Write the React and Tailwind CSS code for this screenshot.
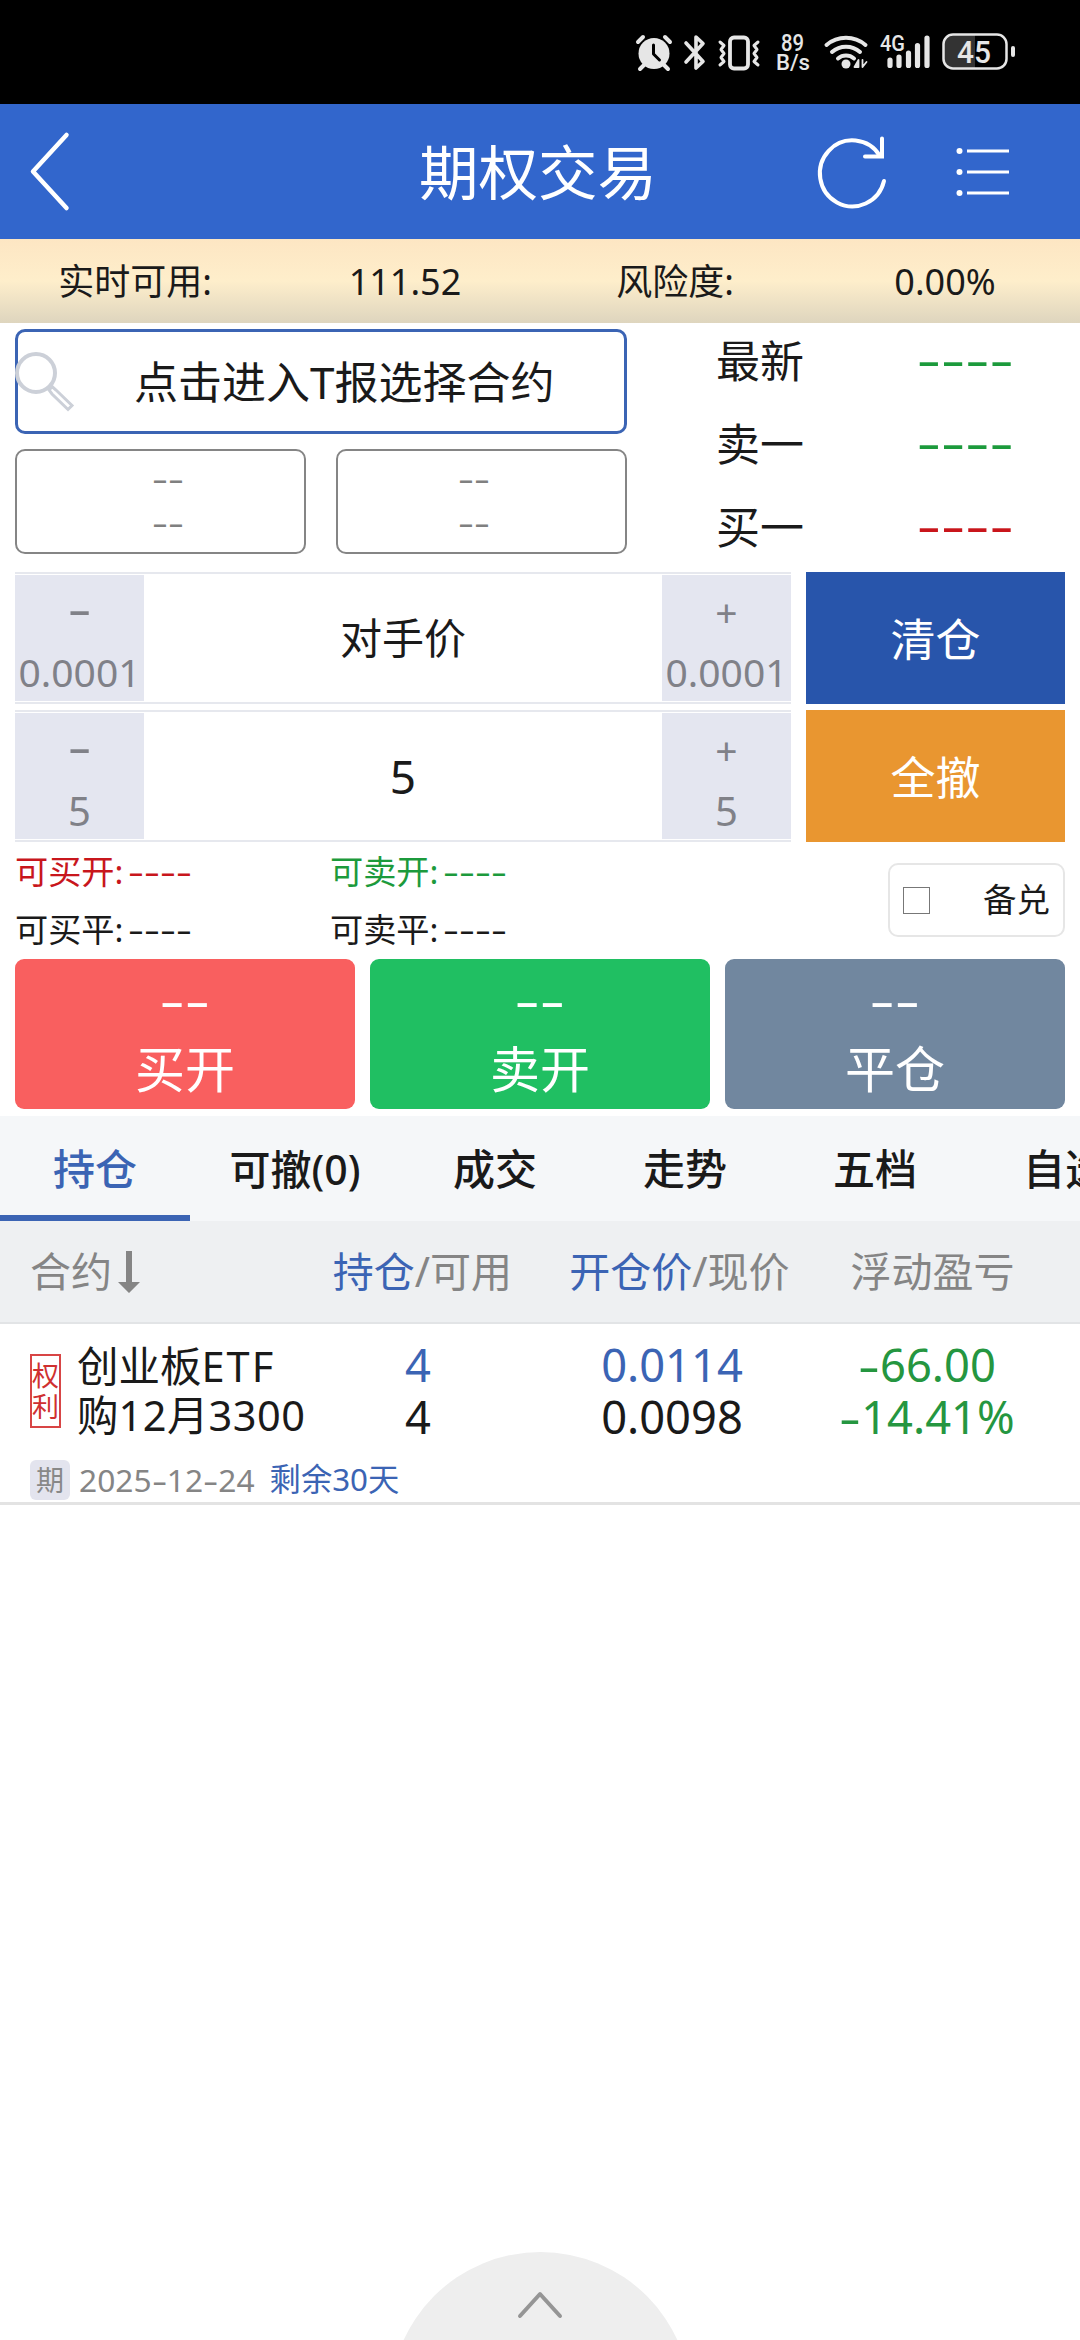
import React from "react";

const FONT = "font-['Noto_Sans','Noto_Sans_CJK_SC',sans-serif]";

function Dashes({ children, className = "" }) {
  return (
    <span className={`inline-block scale-x-[1.6] whitespace-nowrap leading-none ${className}`}>
      {children}
    </span>
  );
}

function Hyphen() {
  return <span className="mr-[0.16em] inline-block origin-left scale-x-[1.5] leading-none">-</span>;
}

function StatusBar() {
  return (
    <div className="h-[104px] bg-black">
      <svg width="1080" height="104" viewBox="0 0 1080 104" fill="none" stroke="#e6e6e6" strokeLinecap="round" strokeLinejoin="round">
        <circle cx="654" cy="53.500" r="15.500" fill="#e6e6e6" stroke="none" />
        <path d="M638 42l5-5M670 42l-5-5M644 65l-4 4M664 65l4 4" strokeWidth="4" />
        <path d="M653.500 45v9l6 6" stroke="#000" strokeWidth="3" />
        <path d="M686 43l17 18.500-7 6.500V37l7 6.500L686 62" strokeWidth="3.600" />
        <rect x="730" y="37.500" width="18" height="31" rx="4" strokeWidth="3.800" />
        <path d="M720 42l4 3.500-3 4 3 4-3 4 3 4-4 3.500M758 42l-4 3.500 3 4-3 4 3 4-3 4 4 3.500" strokeWidth="3" />
        <path d="M826.500 45a30 30 0 0 1 39 0M832 52a21 21 0 0 1 28 0M838 58.500a12.500 12.500 0 0 1 16 0" strokeWidth="4" />
        <circle cx="846" cy="64" r="4.500" fill="#e6e6e6" stroke="none" />
        <path d="M858.500 60v7h-4zM862.500 67v-7M862.500 67l4-5" strokeWidth="1.800" fill="#e6e6e6" />
        <path d="M890 60v5.500M899 57v8.500M908.500 53v12.500M917.500 45.500v20M927 38v27.500" strokeWidth="5.200" />
        <path d="M975 35H953a10 10 0 0 0-10 10v13a10 10 0 0 0 10 10h22z" fill="#333" stroke="none" />
        <rect x="943.500" y="34.500" width="63" height="34" rx="9.500" strokeWidth="2.500" />
        <path d="M1013 48v7" strokeWidth="4" />
        <g fill="#e6e6e6" stroke="none" fontFamily="Roboto, sans-serif" fontWeight="500">
          <text x="781" y="51" fontSize="23" textLength="23" lengthAdjust="spacingAndGlyphs">89</text>
          <text x="776" y="70" fontSize="22.500" textLength="34" lengthAdjust="spacingAndGlyphs">B/s</text>
          <text x="880" y="51" fontSize="22.500" textLength="25" lengthAdjust="spacingAndGlyphs">4G</text>
          <text x="957" y="63" fontSize="32" textLength="34" lengthAdjust="spacingAndGlyphs">45</text>
        </g>
      </svg>
    </div>
  );
}

function Header() {
  return (
    <header className="grid h-[135px] grid-cols-[419px_237px_1fr] items-center bg-[#3266cc] text-white">
      <svg className="ml-[24px]" width="56" height="88" viewBox="0 0 56 88" fill="none" stroke="#fff" strokeWidth="4.500" strokeLinecap="round" strokeLinejoin="round">
        <path d="M42.500 7L9 43.500L42.500 80" />
      </svg>
      <h1 className="whitespace-nowrap text-[59.5px] leading-none">期权交易</h1>
      <div className="flex items-center">
        <svg className="-mt-[2px] ml-[155px]" width="84" height="84" viewBox="0 0 84 84" fill="none" stroke="#fff" strokeWidth="4" strokeLinecap="round">
          <path d="M69 27A32.500 33 0 1 0 73 52" />
          <path d="M71 9.500V27.500H54" strokeLinejoin="miter" />
        </svg>
        <svg className="ml-[59px]" width="60" height="60" viewBox="0 0 60 60">
          <g fill="#fff">
            <circle cx="5.500" cy="9" r="3" />
            <circle cx="5.500" cy="30" r="3" />
            <circle cx="5.500" cy="51" r="3" />
            <path d="M13 7.500h42v3H13zM13 28.500h42v3H13zM13 49.500h42v3H13z" />
          </g>
        </svg>
      </div>
    </header>
  );
}

function AccountBar() {
  return (
    <div className="grid h-[84px] grid-cols-4 items-center bg-linear-to-b from-[#fde6c3] via-[#feeecb] via-50% to-[#ded5be] pt-[2px] text-center text-[36px] leading-none">
      <span>实时可用:</span>
      <span>111.52</span>
      <span>风险度:</span>
      <span>0.00%</span>
    </div>
  );
}

function ContractPanel() {
  const quotes = [
    ["最新", "text-[#1c9a3c]"],
    ["卖一", "text-[#1c9a3c]"],
    ["买一", "text-[#c9151b]"],
  ];
  return (
    <section className="flex h-[249px] pl-[15px]">
      <div className="w-[612px] pt-[6px]">
        <div className="relative flex h-[105px] items-center rounded-[10px] border-[3px] border-[#3b64b4] pl-[116px] text-[44px] leading-none whitespace-nowrap">
          <svg className="absolute -left-[3px] top-[16px]" width="64" height="66" viewBox="0 0 64 66" fill="none" stroke="#ccd0d8" strokeWidth="4">
            <circle cx="21" cy="25" r="19" />
            <path d="M35 41l2-2.500 4 3.500 16 15.500-4 4L37 46l-3-4z" strokeWidth="3" />
          </svg>
          点击进入T报选择合约
        </div>
        <div className="mt-[15px] grid grid-cols-2 gap-[30px] text-[31px] text-[#808080]">
          <div className="flex h-[105px] flex-col items-center gap-[13px] rounded-[10px] border-2 border-[#858585] pt-[12px] pl-[15px]">
            <Dashes>--</Dashes>
            <Dashes>--</Dashes>
          </div>
          <div className="flex h-[105px] flex-col items-center gap-[13px] rounded-[10px] border-2 border-[#858585] pt-[12px] pr-[15px]">
            <Dashes>--</Dashes>
            <Dashes>--</Dashes>
          </div>
        </div>
      </div>
      <div className="ml-[89px] flex flex-1 flex-col">
        {quotes.map(([label, tone]) => (
          <div key={label} className="grid h-[84px] grid-cols-[149px_200px] items-center pb-[7px] leading-none">
            <span className="text-[44px]">{label}</span>
            <span className={`pb-[3px] text-center text-[47px] ${tone}`}>
              <Dashes>----</Dashes>
            </span>
          </div>
        ))}
      </div>
    </section>
  );
}

function StepButton({ sign, step }) {
  return (
    <div className="flex w-[129px] flex-col items-center bg-[#e4e6f0] leading-none text-[#808188]">
      <span className="mt-[16px] flex h-[40px] items-center text-[39px]">
        {sign === "-" ? <Dashes className="pb-[6px] text-[47px]">-</Dashes> : sign}
      </span>
      <span className={step.length > 1 ? "mt-[21px] text-[39px]" : "mt-[22px] text-[40px]"}>{step}</span>
    </div>
  );
}

function StepRow({ value, step, valueClass, action, actionClass }) {
  return (
    <div className="flex h-[132px] gap-[15px]">
      <div className="flex w-[776px] border-y-2 border-[#e6e8ee] py-px">
        <StepButton sign="-" step={step} />
        <div className={`flex flex-1 items-center justify-center leading-none ${valueClass}`}>{value}</div>
        <StepButton sign="+" step={step} />
      </div>
      <button className={`flex-1 pt-[3px] text-[45px] leading-none text-white ${actionClass}`}>{action}</button>
    </div>
  );
}

function Limits() {
  return (
    <section className="flex h-[117px] pl-[15px] pr-[15px]">
      <div className="grid flex-1 grid-cols-[315px_1fr] grid-rows-[58px_58px] items-center pt-px whitespace-nowrap text-[33.2px] leading-none">
        {[
          ["可买开:", "text-[#c8161c]"],
          ["可卖开:", "text-[#1c9a3c]"],
          ["可买平:", ""],
          ["可卖平:", ""],
        ].map(([label, tone]) => (
          <div key={label} className={`flex items-center ${tone}`}>
            <span>{label}</span>
            <Dashes className="ml-[5px] origin-left text-[31px]">----</Dashes>
          </div>
        ))}
      </div>
      <label className="mt-[21px] flex h-[74px] w-[177px] items-center justify-between rounded-[10px] border-2 border-[#e6e6e6] pl-[13px] pr-[13px] text-[33.5px] leading-none">
        <span className="size-[27px] border border-[#777]" />
        <span>备兑</span>
      </label>
    </section>
  );
}

function OrderButtons() {
  const items = [
    ["买开", "bg-[#f95f5f]"],
    ["卖开", "bg-[#20bf62]"],
    ["平仓", "bg-[#71879f]"],
  ];
  return (
    <section className="grid h-[150px] grid-cols-3 gap-[15px] px-[15px]">
      {items.map(([label, tone]) => (
        <button key={label} className={`flex flex-col items-center rounded-[9px] leading-none text-white ${tone}`}>
          <Dashes className="mt-[16px] text-[49px]">--</Dashes>
          <span className="mt-[20px] text-[50px]">{label}</span>
        </button>
      ))}
    </section>
  );
}

function Tabs() {
  return (
    <nav className="mt-[7px] flex h-[105px] overflow-hidden bg-[#f5f7f9] pt-px text-[42px] leading-none font-medium whitespace-nowrap">
      <div className="flex w-[190px] shrink-0 items-center justify-center border-b-[6px] border-[#3b64b4] pt-[6px] text-[#3b64b4]">持仓</div>
      <div className="flex w-[210px] shrink-0 items-center justify-center text-[41px]">可撤(0)</div>
      <div className="flex w-[190px] shrink-0 items-center justify-center">成交</div>
      <div className="flex w-[190px] shrink-0 items-center justify-center">走势</div>
      <div className="flex w-[190px] shrink-0 items-center justify-center">五档</div>
      <div className="flex w-[190px] shrink-0 items-center justify-center">自选</div>
    </nav>
  );
}

function Positions() {
  return (
    <section>
      <div className="grid h-[103px] grid-cols-[302px_241px_273px_233px] items-center border-b-2 border-[#e2e4e6] bg-[#eef0f2] text-center text-[41px] leading-none whitespace-nowrap text-[#858585]">
        <div className="flex items-center pl-[30px]">
          合约
          <svg className="ml-[5px]" width="24" height="44" viewBox="0 0 24 44" fill="#858585">
            <path d="M9 1h6v31h8L12 43L1 32h8z" />
          </svg>
        </div>
        <div><span className="text-[#3b64b4]">持仓</span>/可用</div>
        <div><span className="text-[#3b64b4]">开仓价</span>/现价</div>
        <div>浮动盈亏</div>
      </div>
      <div className="h-[181px] border-b-[3px] border-[#e3e3e3]">
        <div className="grid h-[134px] grid-cols-[300px_236px_272px_238px] text-center text-[45.3px] leading-[52px]">
          <div className="flex pl-[30px] pt-[18px] text-left">
            <div className="mt-[12px] flex h-[74px] w-[33px] flex-col items-center justify-center border-2 border-[#d84545] text-[27px] leading-[31px] text-[#cf3030]">
              <span>权</span>
              <span>利</span>
            </div>
            <div className="ml-[16px] text-[41.5px] leading-[49px] whitespace-nowrap">
              <div>创业板<span className="tracking-[2px]">ETF</span></div>
              <div>购<span className="tracking-[0.5px]">12</span>月<span className="tracking-[0.5px]">3300</span></div>
            </div>
          </div>
          <div className="pt-[15px]">
            <div className="text-[#3b64b4]">4</div>
            <div>4</div>
          </div>
          <div className="pt-[15px]">
            <div className="text-[#3b64b4]">0.0114</div>
            <div>0.0098</div>
          </div>
          <div className="pt-[15px] text-[#259640]">
            <div><Hyphen />66.00</div>
            <div><Hyphen />14.41%</div>
          </div>
        </div>
        <div className="mt-[2px] flex h-[40px] items-center pl-[30px] text-[31.7px] leading-none">
          <span className="flex h-[40px] w-[40px] items-center justify-center rounded-[6px] bg-[#e3e4ee] text-[28px] text-[#888]">期</span>
          <span className="ml-[9px] text-[#858585]">2025<Hyphen />12<Hyphen />24</span>
          <span className="ml-[15px] text-[31.3px] text-[#3b64b4]">剩余30天</span>
        </div>
      </div>
    </section>
  );
}

export default function App() {
  return (
    <main className={`flex h-[2340px] w-[1080px] flex-col overflow-hidden bg-white text-[#1a1a1a] ${FONT}`}>
      <StatusBar />
      <Header />
      <AccountBar />
      <ContractPanel />
      <div className="flex flex-col gap-[6px] px-[15px]">
        <StepRow value="对手价" step="0.0001" valueClass="text-[42px]" action="清仓" actionClass="bg-[#2855ab]" />
        <StepRow value="5" step="5" valueClass="text-[46px]" action="全撤" actionClass="bg-[#e99630]" />
      </div>
      <Limits />
      <OrderButtons />
      <Tabs />
      <Positions />
      <footer className="mt-auto flex h-[88px] justify-center overflow-hidden">
        <div className="flex size-[301px] shrink-0 justify-center rounded-full bg-[#eee]">
          <svg className="mt-[37px]" width="48" height="32" viewBox="0 0 48 32" fill="none" stroke="#959595" strokeWidth="4" strokeLinecap="round" strokeLinejoin="round">
            <path d="M4 27L24 5L44 27" />
          </svg>
        </div>
      </footer>
    </main>
  );
}
